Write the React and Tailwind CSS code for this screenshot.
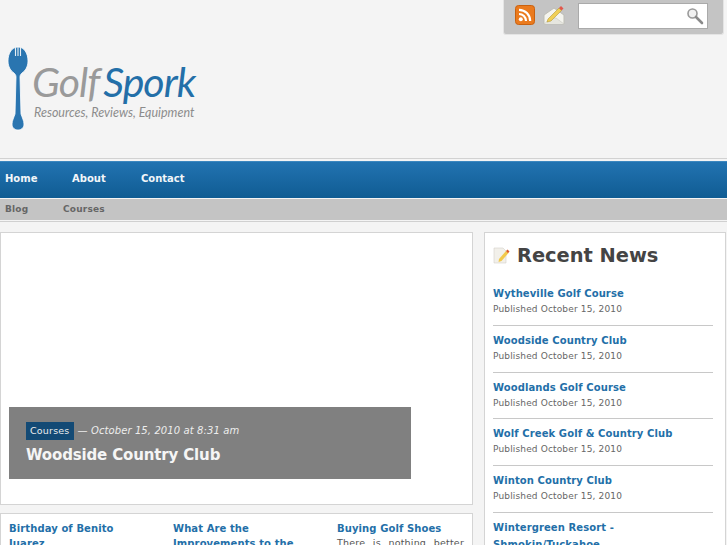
import React from 'react';

const news = [
    { title: 'Wytheville Golf Course' },
    { title: 'Woodside Country Club' },
    { title: 'Woodlands Golf Course' },
    { title: 'Wolf Creek Golf & Country Club' },
    { title: 'Winton Country Club' },
    { title: 'Wintergreen Resort - Shmokin/Tuckahoe' },
];

const Fork = () => (
    <svg width="22" height="86" viewBox="0 0 22 86" className="shrink-0">
        <path d="M11 1C5 1 1 7 1 15c0 6 3 10 6 12 1 1 2 2 2 4l-1 37c-1 3-3 7-3 10 0 4 3 6 6 6s6-2 6-6c0-3-2-7-3-10l-1-37c0-2 1-3 2-4 3-2 6-6 6-12C21 7 17 1 11 1z" fill="#2a75b0" stroke="#fff" strokeWidth="0.8" />
        <path d="M8.5 1v9M11 1v9M13.5 1v9" stroke="#e8eef3" strokeWidth="1.1" />
    </svg>
);

const RssIcon = () => (
    <svg width="20" height="20" viewBox="0 0 20 20">
        <rect x="0.5" y="0.5" width="19" height="19" rx="3" fill="#ea7a1e" stroke="#c9610f" />
        <circle cx="5.8" cy="14.2" r="2" fill="#fff" />
        <path d="M4 9a7 7 0 0 1 7 7M4 4.8A11.2 11.2 0 0 1 15.2 16" fill="none" stroke="#fff" strokeWidth="2.2" />
    </svg>
);

const MailIcon = () => (
    <svg width="22" height="22" viewBox="0 0 22 22">
        <path d="M1 11l10-7 10 7v9H1z" fill="#f4f4ee" stroke="#bdbdb5" />
        <path d="M1 20l8-6h4l8 6" fill="#e6e6df" stroke="#c8c8c0" strokeWidth="0.6" />
        <path d="M5 15L16 4l2.500 2.500L8 17l-4 1z" fill="#f0cf55" stroke="#b59a3a" strokeWidth="0.6" />
        <path d="M16 4l2-2 2.500 2.500-2 2z" fill="#e2574c" />
    </svg>
);

const SearchIcon = () => (
    <svg width="18" height="18" viewBox="0 0 18 18">
        <circle cx="6.5" cy="6.5" r="4.500" fill="#f1f1f1" stroke="#999" strokeWidth="1.6" />
        <path d="M10 10l6 6" stroke="#8a8a8a" strokeWidth="2.6" strokeLinecap="round" />
    </svg>
);

const NoteIcon = () => (
    <svg width="17" height="17" viewBox="0 0 17 17">
        <path d="M1 1h9l3 3v12H1z" fill="#f2f0ea" stroke="#d4d2ca" strokeWidth="0.6" />
        <path d="M6 12l7-8 2.500 2-7 8-3 1z" fill="#f2c94c" />
        <path d="M13 4l1.500-1.500 2 2L15 6.200z" fill="#dd5a2b" />
    </svg>
);

const Teaser = ({ title, children, className }) => (
    <div className={className}>
        <a className="block text-[10px] leading-[15px] font-bold text-[#236fa8] tracking-[0.1px]">{title}</a>
        {children}
    </div>
);

export default function App() {
    return (
        <div className="w-[727px] h-[545px] overflow-hidden bg-[#f4f4f4] font-['DejaVu_Sans',sans-serif]">
            <header className="h-[159px] border-b border-[#d2d2d2] flex flex-col">
                <div className="flex justify-end pr-[3px]">
                    <div className="w-[221px] h-[35px] bg-[#c4c4c4] border border-t-0 border-[#e4e4e4] rounded-b-[3px] flex items-start pt-[4px] pl-[11px]">
                        <div className="mt-[1px]"><RssIcon /></div>
                        <div className="ml-[8px]"><MailIcon /></div>
                        <div className="ml-[13px] w-[130px] h-[26px] -mt-[1px] bg-white border border-[#aaa] flex items-center justify-end pr-[3px]">
                            <SearchIcon />
                        </div>
                    </div>
                </div>
                <div className="flex pl-[7px] pt-[11px]">
                    <Fork />
                    <div className="ml-[3px] pt-[14px]">
                        <div className="font-['Lato',sans-serif] italic text-[41px] leading-[44px] tracking-[-1px] whitespace-nowrap">
                            <span className="text-[#9a9a9a]">Golf</span>
                            <span className="text-[#236fa8] ml-[4px]">Spork</span>
                        </div>
                        <div className="font-['Lato',sans-serif] italic text-[#8c8c8c] text-[12.5px] leading-[16px] mt-[1px] ml-[2px] whitespace-nowrap">
                            Resources, Reviews, Equipment
                        </div>
                    </div>
                </div>
            </header>

            <nav className="mt-[2px] h-[37px] bg-gradient-to-b from-[#2273b1] to-[#0f5c93] border-t border-[#3c87bf] flex items-center pl-[5px] pb-[3px] text-[10px] font-bold text-[#f2f6f9]">
                <a className="w-[67px]">Home</a>
                <a className="w-[69px]">About</a>
                <a>Contact</a>
            </nav>

            <div className="mt-[1px] h-[21px] bg-[#c4c4c4] border-b-0 flex items-center pl-[5px] text-[9px] font-bold text-[#666] tracking-[0.2px]">
                <a className="w-[58px]">Blog</a>
                <a>Courses</a>
            </div>
            <div className="mt-[1px] h-[1px] bg-[#d0d0d0]" />

            <div className="mt-[10px] flex items-start">
                <main className="w-[473px]">
                    <section className="h-[273px] bg-white border border-[#d4d4d4] flex items-end pl-[8px] pb-[25px]">
                        <div className="w-[402px] h-[72px] bg-[#808080] pl-[17px] pt-[15px]">
                            <div className="flex items-center text-[10px] leading-[18px] text-[#ededed]">
                                <span className="bg-[#134a75] text-[9.5px] px-[4px] tracking-[0.2px]">Courses</span>
                                <span className="ml-[4px] italic tracking-[0.1px]">— October 15, 2010 at 8:31 am</span>
                            </div>
                            <h2 className="mt-[4px] text-[15px] leading-[22px] font-bold text-[#f5f5f5] tracking-[-0.15px]">Woodside Country Club</h2>
                        </div>
                    </section>
                    <section className="mt-[8px] h-[60px] bg-white border border-[#d4d4d4] pl-[8px] pr-[8px] pt-[7px] flex">
                        <Teaser title="Birthday of Benito Juarez" className="w-[164px] pr-[24px]" />
                        <Teaser title="What Are the Improvements to the" className="w-[164px] pr-[24px]" />
                        <Teaser title="Buying Golf Shoes" className="flex-1">
                            <p className="text-[9.5px] leading-[14px] text-[#555] tracking-[0.2px] text-justify [text-align-last:justify]">There is nothing better</p>
                        </Teaser>
                    </section>
                </main>

                <aside className="ml-[11px] w-[242px] h-[400px] bg-white border border-[#d4d4d4] pl-[8px] pr-[12px]">
                    <h2 className="flex items-center h-[45px] text-[#444] text-[19.4px] font-bold">
                        <NoteIcon />
                        <span className="ml-[7px]">Recent News</span>
                    </h2>
                    <ul>
                        {news.map((item, idx) => (
                            <li key={idx} className={idx === 0 ? 'pt-[7px] pb-[8.75px] border-b border-[#c8c8c8]' : 'pt-[6px] pb-[8.75px] border-b border-[#c8c8c8]'}>
                                <a className="block text-[10px] leading-[17px] font-bold text-[#236fa8] tracking-[0.1px]">{item.title}</a>
                                <p className="text-[9px] leading-[14px] text-[#666] tracking-[0.15px]">Published October 15, 2010</p>
                            </li>
                        ))}
                    </ul>
                </aside>
            </div>
        </div>
    );
}
